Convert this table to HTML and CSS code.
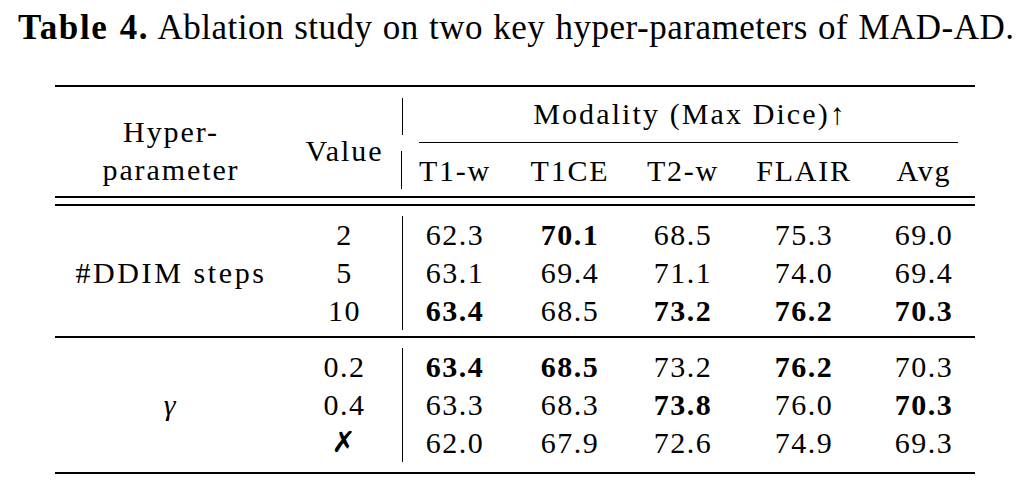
FILE: index.html
```html
<!DOCTYPE html>
<html>
<head>
<meta charset="utf-8">
<link rel="stylesheet" href="styles.css">
</head>
<body>
<div class="page">
  <p class="caption"><b>Table 4.</b> Ablation study on two key hyper-parameters of MAD-AD.</p>
  <div class="table">
    <div class="rule top"></div>
    <div class="head">
      <div class="c1 hcell"><span>Hyper-</span><span>parameter</span></div>
      <div class="c2 hcell"><span>Value</span></div>
      <div class="data">
        <div class="hrow1 vl">Modality (Max Dice)<span class="arrow">↑</span></div>
        <div class="cmid"></div>
        <div class="hrow2 vl cols"><span>T1-w</span><span>T1CE</span><span>T2-w</span><span>FLAIR</span><span>Avg</span></div>
      </div>
    </div>
    <div class="rule dbl1"></div>
    <div class="rule dbl2"></div>
    <div class="group g1">
      <div class="c1 label">#DDIM steps</div>
      <div class="c2 vals"><span>2</span><span>5</span><span>10</span></div>
      <div class="data vl">
        <div class="cols"><span>62.3</span><b>70.1</b><span>68.5</span><span>75.3</span><span>69.0</span></div>
        <div class="cols"><span>63.1</span><span>69.4</span><span>71.1</span><span>74.0</span><span>69.4</span></div>
        <div class="cols"><b>63.4</b><span>68.5</span><b>73.2</b><b>76.2</b><b>70.3</b></div>
      </div>
    </div>
    <div class="rule mid"></div>
    <div class="group g2">
      <div class="c1 label"><i class="gamma">γ</i></div>
      <div class="c2 vals"><span>0.2</span><span>0.4</span><span class="xmark">✗</span></div>
      <div class="data vl">
        <div class="cols"><b>63.4</b><b>68.5</b><span>73.2</span><b>76.2</b><span>70.3</span></div>
        <div class="cols"><span>63.3</span><span>68.3</span><b>73.8</b><span>76.0</span><b>70.3</b></div>
        <div class="cols"><span>62.0</span><span>67.9</span><span>72.6</span><span>74.9</span><span>69.3</span></div>
      </div>
    </div>
    <div class="rule bottom"></div>
  </div>
</div>
</body>
</html>
```
FILE: styles.css
```css
html, body {
  margin: 0;
  padding: 0;
  background: #fff;
}
body {
  color: #000;
  font-family: "Liberation Serif", "Times New Roman", serif;
  width: 1028px;
  height: 484px;
  overflow: hidden;
}
.caption {
  margin: 0;
  height: 81px;
  padding: 4px 0 0 18px;
  font-size: 35px;
  line-height: 48px;
  letter-spacing: 0.5px;
  word-spacing: 1px;
  white-space: nowrap;
}
.caption b {
  font-weight: bold;
  letter-spacing: 1.6px;
}
.table {
  margin-left: 55px;
  width: 920px;
  font-size: 30px;
  letter-spacing: 1.5px;
}
.rule {
  background: #000;
}
.rule.top {
  height: 2px;
}
.rule.dbl1 {
  height: 2px;
  margin-top: 7px;
}
.rule.dbl2 {
  height: 2px;
  margin-top: 6px;
}
.rule.mid {
  height: 1.5px;
  margin-top: 6px;
}
.rule.bottom {
  height: 2px;
  margin-top: 10px;
}
.head {
  display: flex;
  margin-top: 11px;
}
.c1 {
  width: 232px;
  flex: none;
}
.c2 {
  width: 115px;
  flex: none;
}
.data {
  flex: 1;
}
.vl {
  border-left: 1px solid #000;
}
.hcell {
  display: flex;
  flex-direction: column;
  justify-content: center;
  align-items: center;
  line-height: 38px;
  padding-top: 15px;
  letter-spacing: 1.9px;
}
.hrow1 {
  height: 37px;
  line-height: 32px;
  text-align: center;
  letter-spacing: 2.1px;
}
.arrow {
  letter-spacing: 0;
}
.cmid {
  height: 1px;
  background: #000;
  margin: 7px 17px 8px 17px;
}
.hrow2 {
  height: 38px;
  line-height: 40px;
  letter-spacing: 1.8px;
}
.cols {
  display: grid;
  grid-template-columns: 106px 124px 102px 140px 100px;
  text-align: center;
  margin-left: -1px;
}
.group {
  display: flex;
  margin-top: 10px;
}
.group .data .cols {
  height: 38px;
  line-height: 37px;
}
.label {
  display: flex;
  align-items: center;
  justify-content: center;
  letter-spacing: 2.6px;
}
.vals {
  display: flex;
  flex-direction: column;
  align-items: center;
}
.vals span {
  height: 38px;
  line-height: 37px;
}
.cols b {
  font-weight: bold;
}
.gamma {
  font-style: italic;
}
.xmark {
  font-family: "DejaVu Sans", sans-serif;
  font-weight: bold;
  font-size: 29px;
}
```
